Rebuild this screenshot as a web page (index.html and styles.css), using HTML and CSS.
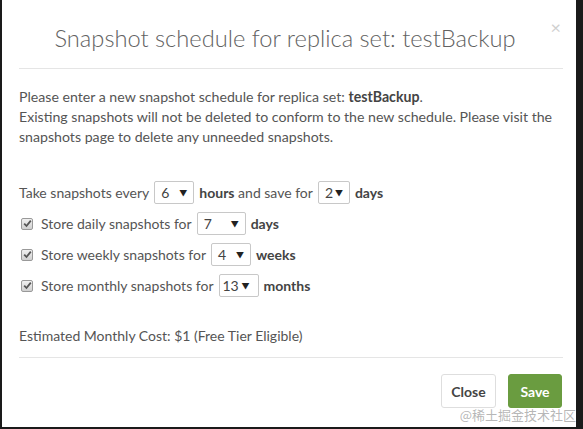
FILE: index.html
```html
<!DOCTYPE html>
<html>
<head>
<meta charset="utf-8">
<link rel="stylesheet" href="styles.css">
</head>
<body>
<div class="modal">
  <div class="header">
    <h1 class="title">Snapshot schedule for replica set: testBackup</h1>
    <span class="close-x">×</span>
  </div>
  <div class="body">
    <p class="intro">Please enter a new snapshot schedule for replica set: <b>testBackup</b>.<br>Existing snapshots will not be deleted to conform to the new schedule. Please visit the snapshots page to delete any unneeded snapshots.</p>
    <div class="rows">
      <div class="row">Take snapshots every<span class="sel w40"><span>6</span><span class="caret">▼</span></span><b>hours</b>&nbsp;and save for<span class="sel w32"><span>2</span><span class="caret">▼</span></span><b>days</b></div>
      <div class="row"><span class="cb"><svg width="9" height="9" viewBox="0 0 9 9"><path d="M1.2 4.6 L3.5 7 L7.8 1.6" fill="none" stroke="#555" stroke-width="1.8"/></svg></span>Store daily snapshots for<span class="sel w49"><span>7</span><span class="caret">▼</span></span><b>days</b></div>
      <div class="row"><span class="cb"><svg width="9" height="9" viewBox="0 0 9 9"><path d="M1.2 4.6 L3.5 7 L7.8 1.6" fill="none" stroke="#555" stroke-width="1.8"/></svg></span>Store weekly snapshots for<span class="sel w40"><span>4</span><span class="caret">▼</span></span><b>weeks</b></div>
      <div class="row"><span class="cb"><svg width="9" height="9" viewBox="0 0 9 9"><path d="M1.2 4.6 L3.5 7 L7.8 1.6" fill="none" stroke="#555" stroke-width="1.8"/></svg></span>Store monthly snapshots for<span class="sel w40 wide"><span>13</span><span class="caret">▼</span></span><b>months</b></div>
    </div>
    <p class="cost">Estimated Monthly Cost: $1 (Free Tier Eligible)</p>
  </div>
  <div class="footer">
    <button class="btn btn-close">Close</button>
    <button class="btn btn-save">Save</button>
  </div>
  <span class="watermark">@稀土掘金技术社区</span>
</div>
</body>
</html>
```
FILE: styles.css
```css
html, body {
  margin: 0;
  padding: 0;
  background: #1a1a1a;
  width: 583px;
  height: 429px;
  overflow: hidden;
}
.modal {
  position: relative;
  margin-left: 2px;
  width: 574px;
  height: 427px;
  background: #fff;
  font-family: Lato, "Noto Sans CJK SC", sans-serif;
  color: #555;
  font-size: 14px;
}
.header {
  position: relative;
  margin: 0 13px 0 17px;
  padding: 22px 0 14px;
  border-bottom: 1px solid #e5e5e5;
}
.title {
  margin: 0;
  font-weight: 300;
  font-size: 23.7px;
  line-height: 32px;
  color: #626262;
  text-align: center;
  padding-right: 12px;
}
.close-x {
  position: absolute;
  right: 2px;
  top: 16px;
  font-size: 18px;
  color: #d0d0d0;
}
.body {
  margin: 0 13px 0 17px;
  border-bottom: 1px solid #e5e5e5;
}
.intro {
  margin: 0;
  padding-top: 18px;
  line-height: 20px;
  font-size: 14.15px;
}
.intro b { color: #444; }
.rows {
  margin-top: 30px;
  display: flex;
  flex-direction: column;
}
.row {
  height: 31px;
  display: flex;
  align-items: center;
}
.row b { color: #444; }
.sel {
  display: inline-flex;
  justify-content: space-between;
  align-items: center;
  box-sizing: border-box;
  height: 23px;
  margin: 0 5px 0 5px;
  border: 1px solid #c8c8c8;
  border-radius: 2px;
  padding: 0 6px 0 6px;
  font-size: 14px;
  color: #444;
}
.sel.wide { padding: 0 8px 0 3px; }
.caret { font-size: 8px; color: #222; }
.w40 { width: 40px; }
.w32 { width: 32px; }
.w49 { width: 49px; }
.cb {
  display: inline-flex;
  align-items: center;
  justify-content: center;
  box-sizing: border-box;
  width: 12px;
  height: 12px;
  margin: 0 8px 0 2px;
  border: 1px solid #999;
  border-radius: 2px;
  background: linear-gradient(#f0f0f0, #d0d0d0);
}
.cost {
  margin: 25px 0 0;
  line-height: 20px;
  padding-bottom: 11px;
}
.footer {
  margin: 0 13px 0 17px;
  padding-top: 16px;
  display: flex;
  justify-content: flex-end;
  gap: 12px;
}
.btn {
  height: 34px;
  border-radius: 3px;
  font-family: inherit;
  font-size: 14px;
  font-weight: bold;
  padding: 0;
}
.btn-close {
  width: 55px;
  background: #fff;
  border: 1px solid #dedede;
  color: #444;
}
.btn-save {
  width: 54px;
  background: #6a9c40;
  border: 1px solid #6a9c40;
  color: #fff;
  margin-right: 1px;
}
.watermark {
  position: absolute;
  right: 0;
  bottom: 3px;
  font-size: 13px;
  color: rgba(120,120,120,0.55);
  font-family: "Noto Sans CJK SC", sans-serif;
}
```
